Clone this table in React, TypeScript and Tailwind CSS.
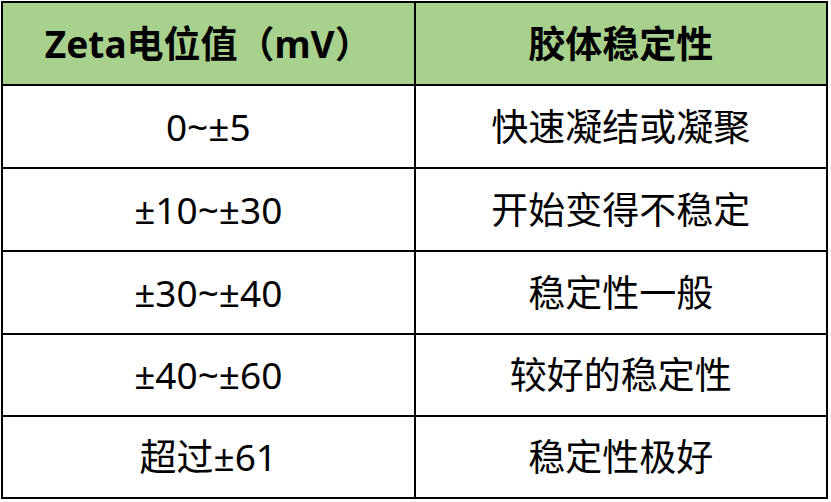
const rows = [
  { zeta: "0~±5", stability: "快速凝结或凝聚", h: "h-[81px]" },
  { zeta: "±10~±30", stability: "开始变得不稳定", h: "h-[81px]" },
  { zeta: "±30~±40", stability: "稳定性一般", h: "h-[81px]" },
  { zeta: "±40~±60", stability: "较好的稳定性", h: "h-[80px]" },
  { zeta: "超过±61", stability: "稳定性极好", h: "h-[80px]" },
]

export default function App() {
  return (
    <div className="w-[831px] h-[502px] bg-white pt-[1px] pl-[1px] font-['Noto_Sans','Noto_Sans_CJK_SC',sans-serif] text-black">
      <div className="grid grid-cols-2 gap-[2px] bg-black p-[2px] w-[827px]">
        <div className="h-[81px] bg-[#a9d18e] flex items-center justify-center text-[37px] font-bold">
          Zeta电位值（mV）
        </div>
        <div className="h-[81px] bg-[#a9d18e] flex items-center justify-center text-[37px] font-bold">
          胶体稳定性
        </div>
        {rows.map((r) => (
          <>
            <div key={r.zeta} className={`${r.h} bg-white flex items-center justify-center text-[37px]`}>
              {r.zeta}
            </div>
            <div key={r.stability} className={`${r.h} bg-white flex items-center justify-center text-[37px]`}>
              {r.stability}
            </div>
          </>
        ))}
      </div>
    </div>
  )
}
